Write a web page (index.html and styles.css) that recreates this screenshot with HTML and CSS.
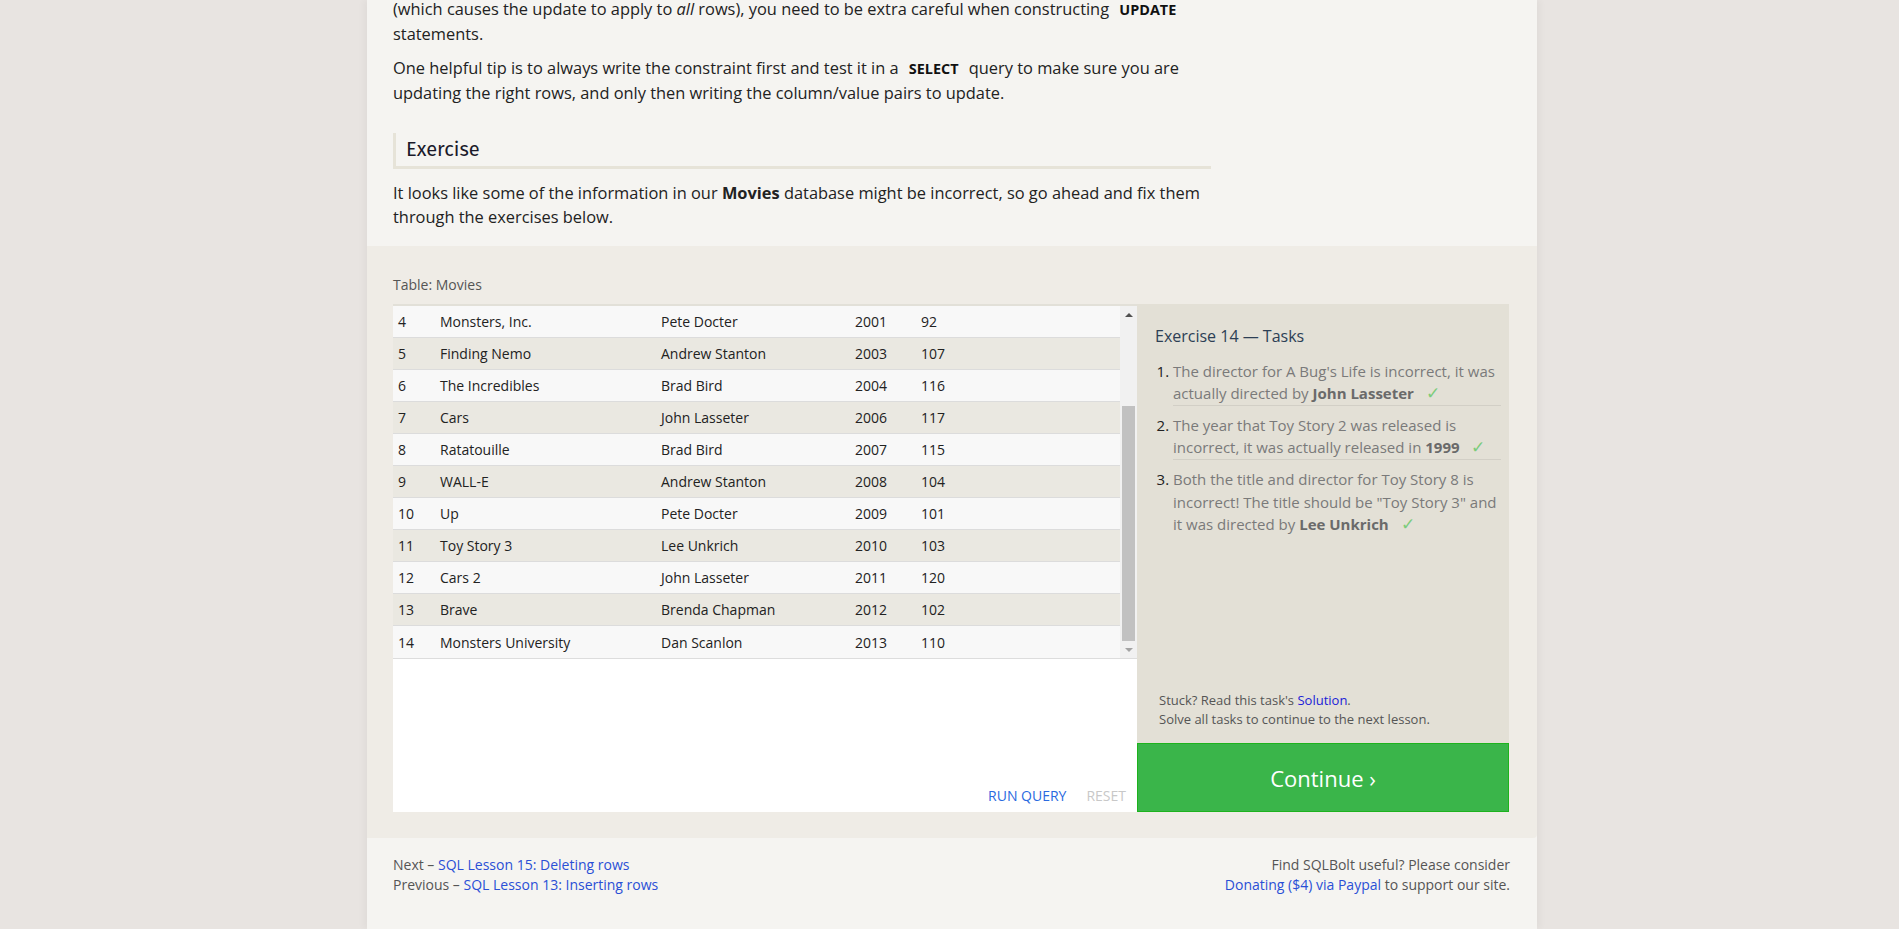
FILE: index.html
```html
<!DOCTYPE html>
<html>
<head>
<meta charset="utf-8">
<link rel="stylesheet" href="styles.css">
</head>
<body>
<div class="page">
  <div class="lesson">
    <p class="p first">(which causes the update to apply to <em>all</em> rows), you need to be extra careful when constructing <code>UPDATE</code> statements.</p>
    <p class="p">One helpful tip is to always write the constraint first and test it in a <code>SELECT</code> query to make sure you are updating the right rows, and only then writing the column/value pairs to update.</p>
    <h3 class="heading">Exercise</h3>
    <p class="p">It looks like some of the information in our <strong>Movies</strong> database might be incorrect, so go ahead and fix them through the exercises below.</p>
  </div>

  <div class="exercise">
    <div class="table-label">Table: Movies</div>
    <div class="panes">
      <div class="editor">
        <div class="results">
          <div class="rows">
            <div class="row light"><span class="c-id">4</span><span class="c-title">Monsters, Inc.</span><span class="c-dir">Pete Docter</span><span class="c-year">2001</span><span class="c-len">92</span></div>
            <div class="row dark"><span class="c-id">5</span><span class="c-title">Finding Nemo</span><span class="c-dir">Andrew Stanton</span><span class="c-year">2003</span><span class="c-len">107</span></div>
            <div class="row light"><span class="c-id">6</span><span class="c-title">The Incredibles</span><span class="c-dir">Brad Bird</span><span class="c-year">2004</span><span class="c-len">116</span></div>
            <div class="row dark"><span class="c-id">7</span><span class="c-title">Cars</span><span class="c-dir">John Lasseter</span><span class="c-year">2006</span><span class="c-len">117</span></div>
            <div class="row light"><span class="c-id">8</span><span class="c-title">Ratatouille</span><span class="c-dir">Brad Bird</span><span class="c-year">2007</span><span class="c-len">115</span></div>
            <div class="row dark"><span class="c-id">9</span><span class="c-title">WALL-E</span><span class="c-dir">Andrew Stanton</span><span class="c-year">2008</span><span class="c-len">104</span></div>
            <div class="row light"><span class="c-id">10</span><span class="c-title">Up</span><span class="c-dir">Pete Docter</span><span class="c-year">2009</span><span class="c-len">101</span></div>
            <div class="row dark"><span class="c-id">11</span><span class="c-title">Toy Story 3</span><span class="c-dir">Lee Unkrich</span><span class="c-year">2010</span><span class="c-len">103</span></div>
            <div class="row light"><span class="c-id">12</span><span class="c-title">Cars 2</span><span class="c-dir">John Lasseter</span><span class="c-year">2011</span><span class="c-len">120</span></div>
            <div class="row dark"><span class="c-id">13</span><span class="c-title">Brave</span><span class="c-dir">Brenda Chapman</span><span class="c-year">2012</span><span class="c-len">102</span></div>
            <div class="row light"><span class="c-id">14</span><span class="c-title">Monsters University</span><span class="c-dir">Dan Scanlon</span><span class="c-year">2013</span><span class="c-len">110</span></div>
          </div>
          <div class="scrollbar">
            <div class="arrow up"></div>
            <div class="track"><div class="thumb"></div></div>
            <div class="arrow down"></div>
          </div>
        </div>
        <div class="actions">
          <span class="run">RUN QUERY</span>
          <span class="reset">RESET</span>
        </div>
      </div>
      <div class="side">
        <div class="tasks">
          <div class="tasks-title">Exercise 14 — Tasks</div>
          <ol class="task-list">
            <li>The director for A Bug's Life is incorrect, it was actually directed by <b>John Lasseter</b> <span class="check">✓</span></li>
            <li>The year that Toy Story 2 was released is incorrect, it was actually released in <b>1999</b> <span class="check">✓</span></li>
            <li>Both the title and director for Toy Story 8 is incorrect! The title should be "Toy Story 3" and it was directed by <b>Lee Unkrich</b> <span class="check">✓</span></li>
          </ol>
          <div class="stuck">
            <div>Stuck? Read this task's <a class="sol">Solution</a>.</div>
            <div>Solve all tasks to continue to the next lesson.</div>
          </div>
        </div>
        <div class="continue">Continue ›</div>
      </div>
    </div>
  </div>

  <div class="footer">
    <div class="nav">
      <div>Next – <a class="link">SQL Lesson 15: Deleting rows</a></div>
      <div>Previous – <a class="link">SQL Lesson 13: Inserting rows</a></div>
    </div>
    <div class="donate">
      <div>Find SQLBolt useful? Please consider</div>
      <div><a class="link">Donating ($4) via Paypal</a> to support our site.</div>
    </div>
  </div>
</div>
</body>
</html>
```

FILE: styles.css
```css
html, body {
  margin: 0;
  padding: 0;
  background: #e8e4e1;
  height: 100%;
  overflow: hidden;
}
body {
  font-family: "Open Sans", "Noto Sans", sans-serif;
  color: #222;
  padding-left: 5px;
  box-sizing: border-box;
}
.page {
  width: 1170px;
  margin: 0 auto;
  background: #f5f4f1;
  min-height: 100%;
  box-shadow: -4px 0 6px rgba(0,0,0,0.03), 4px 0 6px rgba(0,0,0,0.03);
}
.lesson {
  padding: 0 26px 0 26px;
  width: 818px;
  height: 246px;
  overflow: hidden;
}
.p {
  margin: 0 0 10px 0;
  font-size: 16.4px;
  line-height: 24px;
  color: #222;
}
.p.first {
  margin-top: -3px;
}
.p code {
  font-family: "Open Sans", sans-serif;
  font-weight: 700;
  font-size: 14.4px;
  padding: 0 6px;
  color: #111;
}
.p strong { font-weight: 700; }
.heading {
  margin: 28px 0 12px 0;
  font-weight: 400;
  font-size: 20px;
  line-height: 33px;
  padding: 0 0 0 10px;
  border-left: 3px solid #e6e3d8;
  border-bottom: 3px solid #e6e3d8;
  color: #1a1a2a;
  font-family: "Fira Sans", "Noto Sans", sans-serif;
}
.exercise {
  background: #efece6;
  padding: 28px 27px 26px 26px;
  border-radius: 0 0 4px 0;
}
.table-label {
  font-size: 14px;
  line-height: 22px;
  color: #555;
  margin-bottom: 8px;
}
.panes {
  display: flex;
  height: 508px;
}
.editor {
  width: 744px;
  background: #fff;
  border-top: 2px solid #e2e0d8;
  display: flex;
  flex-direction: column;
  box-sizing: border-box;
}
.results {
  display: flex;
  height: 352px;
  border-bottom: 1px solid #ddd;
}
.rows {
  flex: 1;
}
.row {
  display: flex;
  height: 32px;
  align-items: center;
  font-size: 14px;
  color: #222;
  box-sizing: border-box;
  border-bottom: 1px solid #dcdcdc;
}
.row:last-child { border-bottom: none; }
.row.light { background: #f8f8f8; }
.row.dark { background: #eae8e1; }
.c-id { width: 47px; padding-left: 5px; box-sizing: border-box; }
.c-title { width: 221px; box-sizing: border-box; }
.c-dir { width: 194px; box-sizing: border-box; }
.c-year { width: 66px; box-sizing: border-box; }
.c-len { width: 60px; box-sizing: border-box; }
.scrollbar {
  width: 17px;
  background: #f1f1f1;
  display: flex;
  flex-direction: column;
}
.arrow {
  height: 17px;
  display: flex;
  align-items: center;
  justify-content: center;
}
.arrow.up::before {
  content: "";
  border-left: 4px solid transparent;
  border-right: 4px solid transparent;
  border-bottom: 4px solid #505050;
}
.arrow.down::before {
  content: "";
  border-left: 4px solid transparent;
  border-right: 4px solid transparent;
  border-top: 4px solid #a3a3a3;
}
.track {
  flex: 1;
  display: flex;
  flex-direction: column;
  justify-content: flex-end;
  padding: 0 2px;
}
.thumb {
  height: 235px;
  background: #c1c1c1;
}
.actions {
  flex: 1;
  display: flex;
  justify-content: flex-end;
  align-items: flex-end;
  padding: 0 11px 6px 0;
  gap: 20px;
  font-size: 14px;
  line-height: 20px;
}
.run { color: #2a6ae0; }
.reset { color: #c8c8c8; }
.side {
  width: 372px;
  display: flex;
  flex-direction: column;
}
.tasks {
  flex: 1;
  background: #e3e0d6;
  padding: 21px 8px 14px 18px;
  display: flex;
  flex-direction: column;
}
.tasks-title {
  font-size: 16px;
  line-height: 22px;
  color: #2d3f55;
  margin-bottom: 13px;
}
.task-list {
  margin: 0;
  padding: 0 0 0 18px;
  font-size: 15px;
  line-height: 22px;
  color: #7a7a7a;
}
.task-list li {
  padding: 0;
  margin: 0;
}
.task-list li + li {
  border-top: 1px solid #d2cfc6;
  padding-top: 8px;
}
.task-list li:not(:last-child) { padding-bottom: 1px; }
.task-list li:last-child { line-height: 22.5px; }
.task-list li::marker { color: #222; }
.task-list b { color: #6a6a6a; }
.check {
  color: #7ccc7c;
  margin-left: 8px;
  font-size: 17px;
}
.stuck {
  margin-top: auto;
  padding-left: 4px;
  font-size: 13px;
  line-height: 19px;
  color: #555;
}
.sol { color: #2020d8; }
.continue {
  height: 69px;
  box-sizing: border-box;
  background: #3ab54a;
  border: 1px solid #1db31d;
  color: #fff;
  font-size: 22px;
  display: flex;
  align-items: center;
  justify-content: center;
}
.footer {
  display: flex;
  justify-content: space-between;
  padding: 17px 27px 0 26px;
  font-size: 14px;
  line-height: 20px;
  color: #555;
}
.donate { text-align: right; }
.link { color: #2a4fd6; }
```
